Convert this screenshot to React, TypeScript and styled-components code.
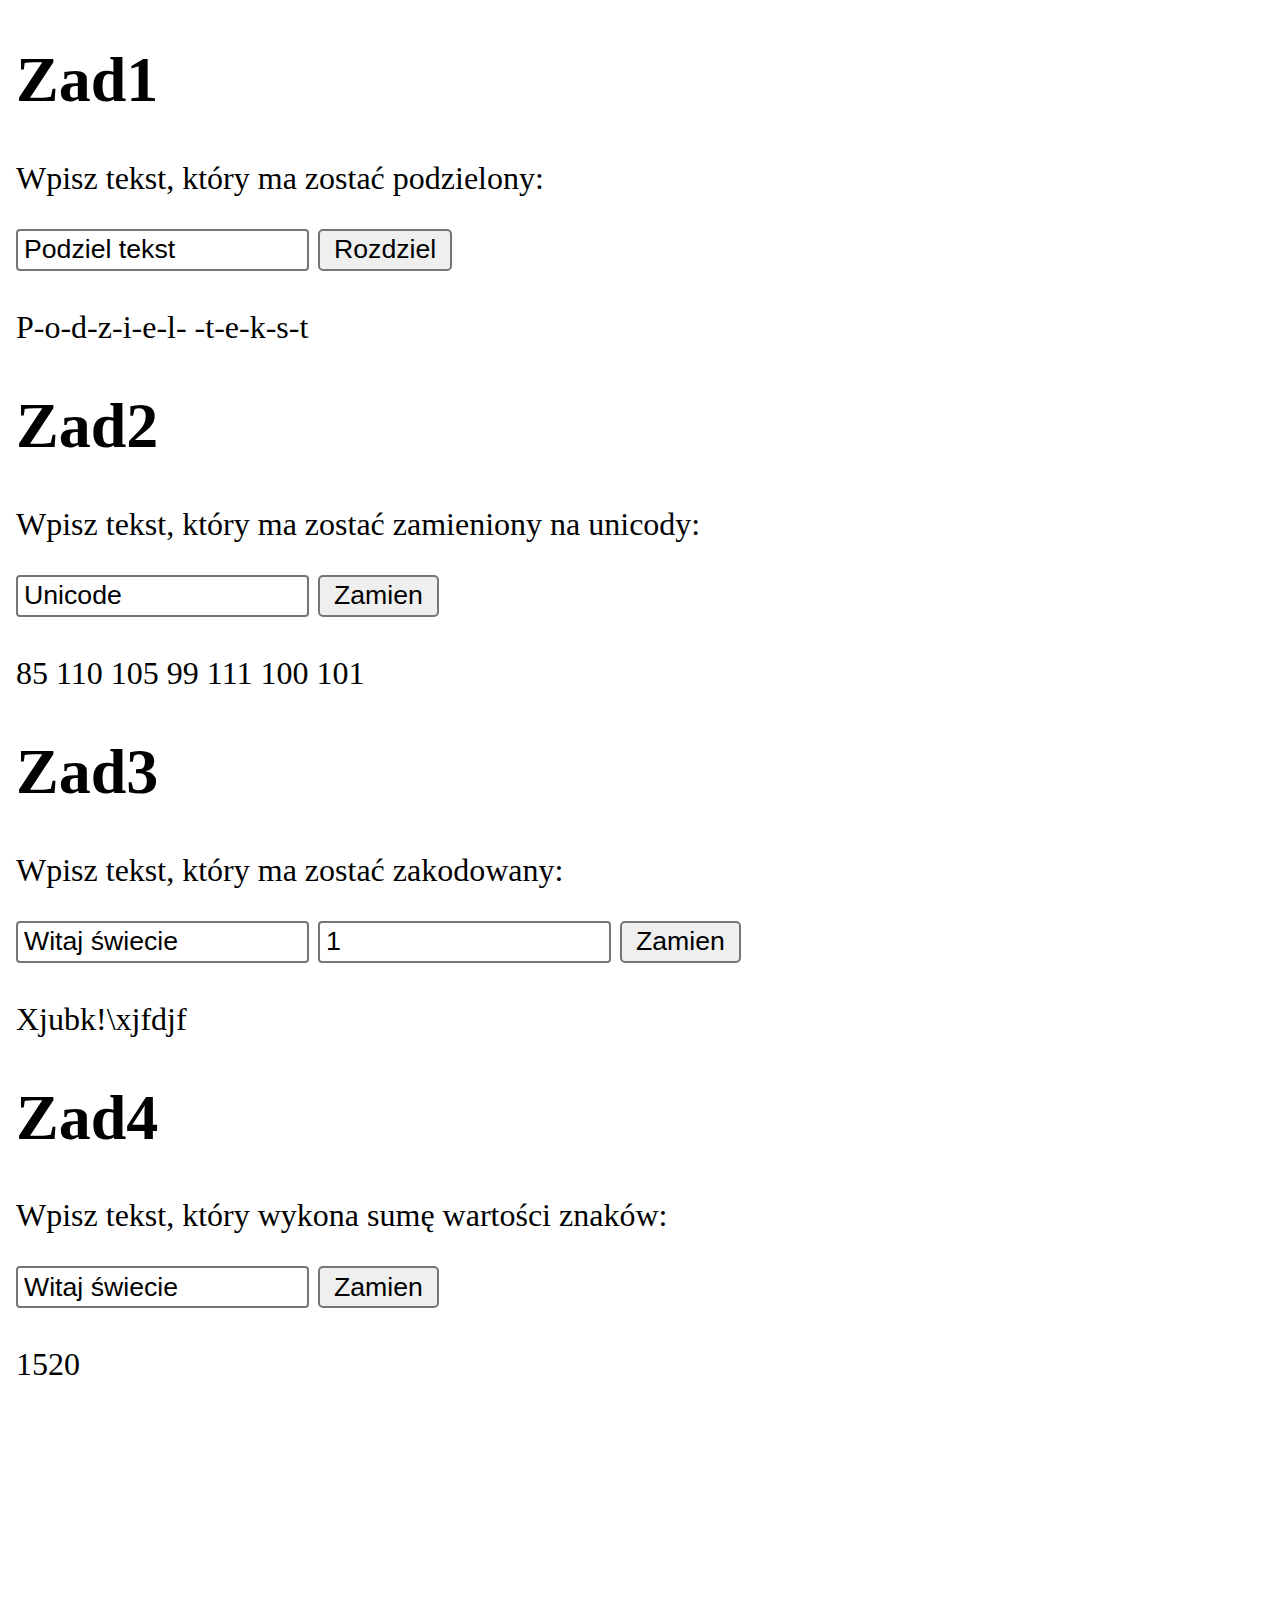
import React, { useState } from 'react';
import styled, { createGlobalStyle } from 'styled-components';

const GlobalStyle = createGlobalStyle`
  body {
    margin: 0 16px;
    background: #ffffff;
    color: #000000;
    font-family: "Liberation Serif", "Times New Roman", serif;
  }
`;

const Heading = styled.h1`
  font-size: 64px;
  font-weight: bold;
  margin: 42.88px 0;
`;

const Prompt = styled.p`
  font-size: 32px;
  margin: 32px 0;
`;

const Row = styled.div`
  display: flex;
  align-items: center;
  gap: 9px;
  margin: 32px 0 38px;
`;

const Field = styled.input`
  box-sizing: border-box;
  width: 293px;
  height: 42px;
  padding: 0 6px;
  border: 2px solid #767676;
  border-radius: 4px;
  background: #ffffff;
  font-family: "Liberation Sans", Arial, sans-serif;
  font-size: 26.67px;
  color: #000000;
  outline: none;
`;

const Button = styled.button`
  box-sizing: border-box;
  height: 42px;
  padding: 0 14px;
  border: 2px solid #767676;
  border-radius: 5px;
  background: #efefef;
  font-family: "Liberation Sans", Arial, sans-serif;
  font-size: 26.67px;
  color: #000000;
  cursor: pointer;
`;

const Result = styled.p`
  font-size: 32px;
  margin: 32px 0 43px;
`;

const split = (s: string): string => s.split('').join('-');
const codes = (s: string): string => s.split('').map((c) => c.charCodeAt(0)).join(' ');
const shift = (s: string, n: number): string =>
  s.split('').map((c) => String.fromCharCode(c.charCodeAt(0) + n)).join('');
const sum = (s: string): string =>
  String(s.split('').reduce((acc, c) => acc + c.charCodeAt(0), 0));

const App: React.FC = () => {
  const [t1, setT1] = useState('Podziel tekst');
  const [r1, setR1] = useState(split('Podziel tekst'));
  const [t2, setT2] = useState('Unicode');
  const [r2, setR2] = useState(codes('Unicode'));
  const [t3, setT3] = useState('Witaj świecie');
  const [k3, setK3] = useState('1');
  const [r3, setR3] = useState('Xjubk!\\xjfdjf');
  const [t4, setT4] = useState('Witaj świecie');
  const [r4, setR4] = useState('1520');

  return (
    <>
      <GlobalStyle />
      <Heading>Zad1</Heading>
      <Prompt>Wpisz tekst, który ma zostać podzielony:</Prompt>
      <Row>
        <Field value={t1} onChange={(e) => setT1(e.target.value)} />
        <Button onClick={() => setR1(split(t1))}>Rozdziel</Button>
      </Row>
      <Result>{r1}</Result>

      <Heading>Zad2</Heading>
      <Prompt>Wpisz tekst, który ma zostać zamieniony na unicody:</Prompt>
      <Row>
        <Field value={t2} onChange={(e) => setT2(e.target.value)} />
        <Button onClick={() => setR2(codes(t2))}>Zamien</Button>
      </Row>
      <Result>{r2}</Result>

      <Heading>Zad3</Heading>
      <Prompt>Wpisz tekst, który ma zostać zakodowany:</Prompt>
      <Row>
        <Field value={t3} onChange={(e) => setT3(e.target.value)} />
        <Field value={k3} onChange={(e) => setK3(e.target.value)} />
        <Button onClick={() => setR3(shift(t3, Number(k3) || 0))}>Zamien</Button>
      </Row>
      <Result>{r3}</Result>

      <Heading>Zad4</Heading>
      <Prompt>Wpisz tekst, który wykona sumę wartości znaków:</Prompt>
      <Row>
        <Field value={t4} onChange={(e) => setT4(e.target.value)} />
        <Button onClick={() => setR4(sum(t4))}>Zamien</Button>
      </Row>
      <Result>{r4}</Result>
    </>
  );
};

export default App;
